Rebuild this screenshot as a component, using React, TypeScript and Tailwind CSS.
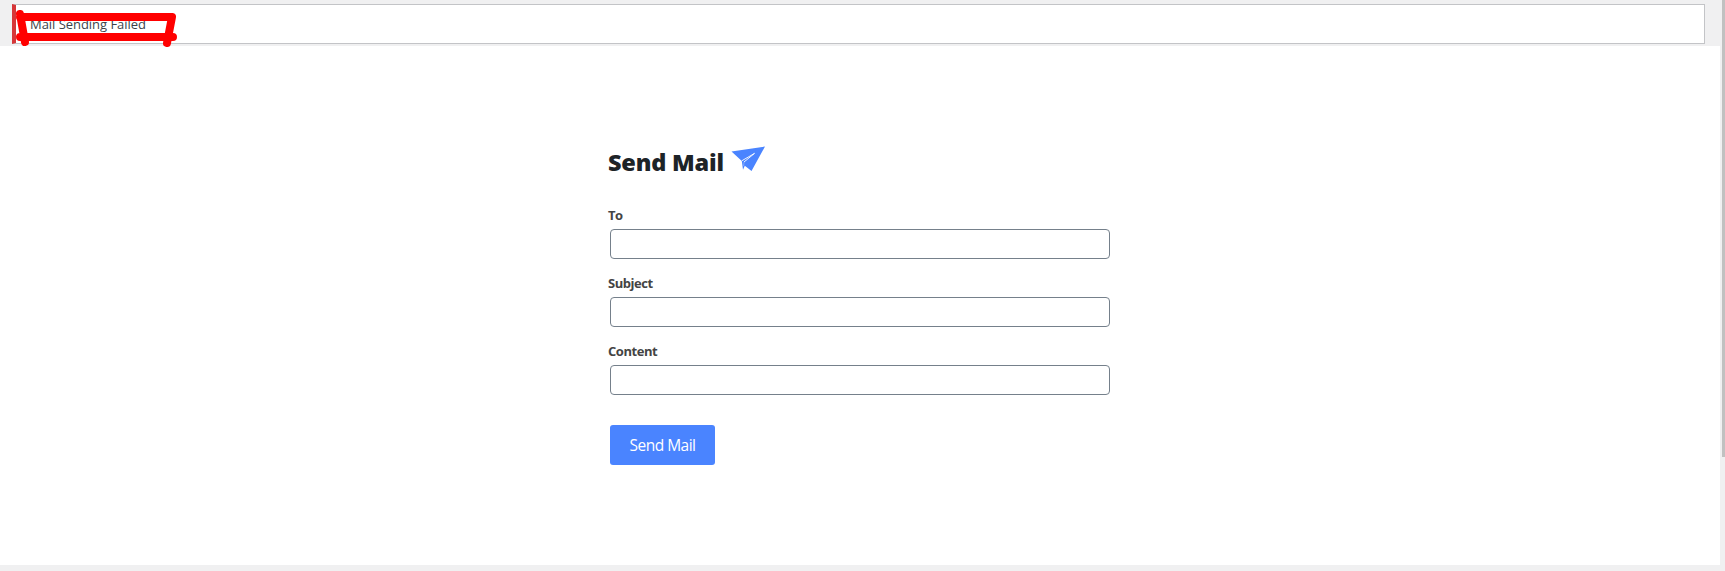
const fields = ["To", "Subject", "Content"];

function Notice() {
  return (
    <div className="relative h-[46px] pt-1 pl-3">
      <div className="flex h-10 w-[1693px] border border-l-4 border-[#c3c4c7] border-l-[#d63638] bg-white pt-[9px] pl-[14px]">
        <p className="text-[13px] leading-[20px] tracking-[-0.04px] text-[#3c434a]">Mail Sending Failed</p>
      </div>
      <svg
        className="absolute top-0 left-0"
        width="190"
        height="52"
        fill="none"
        stroke="#ff0000"
        strokeWidth="8"
        strokeLinecap="round"
        strokeLinejoin="round"
      >
        <path d="M20 17H172M20 37H173M20 14L25 42M172 17L167 43" />
      </svg>
    </div>
  );
}

function PaperPlane() {
  return (
    <svg width="35" height="26" viewBox="0 0 35 26">
      <path d="M0.5 5.5L34 0.5L20.5 25L13.8 19.8L12 23.8L10.8 15Z" fill="#4a84ff" />
      <path d="M10.8 14.8L23.5 7.4L13 16" fill="none" stroke="#fff" strokeWidth="0.9" />
      <path d="M13 16L12.6 20" fill="none" stroke="#fff" strokeOpacity="0.5" strokeWidth="0.6" />
    </svg>
  );
}

export default function App() {
  return (
    <div className="relative h-[571px] w-[1725px] overflow-hidden bg-[#f0f0f1] font-['Open_Sans','Noto_Sans',sans-serif]">
      <Notice />
      <main className="flex h-[519px] w-[1720px] justify-center bg-white pt-[99px]">
        <form className="w-[504px]">
          <div className="flex h-[60px] pt-px">
            <h1 className="w-[123px] whitespace-nowrap text-[23.5px] leading-[33px] font-extrabold tracking-[-0.2px] text-[#1d2327]">
              Send Mail
            </h1>
            <PaperPlane />
          </div>
          {fields.map((name) => (
            <label key={name} className="block h-[68px]">
              <span className="block h-6 text-[13px] leading-[20px] font-bold tracking-[-0.45px] text-[#444444]">
                {name}
              </span>
              <input className="ml-[2px] block h-[30px] w-[500px] rounded-[4px] border border-[#75808b] bg-white px-2 outline-none" />
            </label>
          ))}
          <button
            type="button"
            className="mt-4 ml-[2px] block h-10 w-[105px] rounded-[3px] bg-[#4a84ff] text-[15.5px] leading-10 tracking-[-0.5px] whitespace-nowrap text-white"
          >
            Send Mail
          </button>
        </form>
      </main>
      <div className="absolute top-0 right-0 h-[457px] w-[3px] bg-[#c1c1c1]" />
    </div>
  );
}
